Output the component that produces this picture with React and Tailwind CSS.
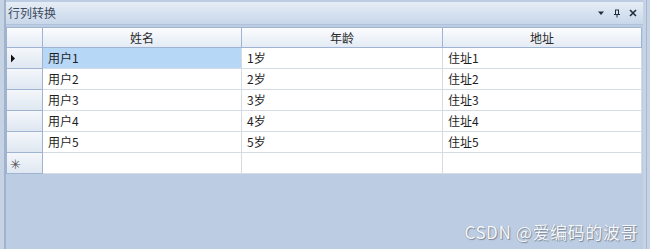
const rows = [
  { name: '用户1', age: '1岁', addr: '住址1' },
  { name: '用户2', age: '2岁', addr: '住址2' },
  { name: '用户3', age: '3岁', addr: '住址3' },
  { name: '用户4', age: '4岁', addr: '住址4' },
  { name: '用户5', age: '5岁', addr: '住址5' },
];

const font = { fontFamily: '"Noto Sans CJK SC", "Noto Sans", sans-serif' };

function RowHead({ children }) {
  return (
    <div className="h-[21px] border-r border-b border-[#9eb4d0] bg-gradient-to-b from-[#f4f7fb] to-[#dfe7f1] flex items-center pl-[3px] text-[11px] text-[#444]">
      {children}
    </div>
  );
}

function Cell({ children, selected }) {
  return (
    <div
      className={`h-[21px] border-r border-b border-[#d5dbe3] flex items-center pl-[5px] text-[12px] text-[#1e1e1e] ${selected ? 'bg-[#b7d7f7]' : 'bg-white'}`}
    >
      {children}
    </div>
  );
}

export default function App() {
  return (
    <div className="w-[650px] h-[249px] bg-[#bccde3] flex overflow-hidden" style={font}>
      {/* left frame */}
      <div className="w-[4px] bg-[#c6d3e4]" />
      <div className="w-[2px] bg-[#a1b3cb]" />

      <div className="flex-1 flex flex-col">
        {/* title bar */}
        <div className="h-[23px] mt-[2px] bg-gradient-to-b from-[#e6edf6] to-[#c8d7ea] border-b border-[#b2c3d9] flex items-center justify-between pr-[6px]">
          <span className="pl-[2px] text-[12px] text-[#3d4b5e]">行列转换</span>
          <div className="flex items-center gap-[8px] text-[#1f2d3d]">
            <svg width="8" height="6" viewBox="0 0 8 6"><path d="M1 1.5h6L4 5z" fill="#1f2d3d" /></svg>
            <svg width="8" height="9" viewBox="0 0 8 9"><path d="M2 1h4M2.5 1v4.5M5.5 1v4.5M1 5.5h6M4 5.5V8.5" stroke="#1f2d3d" strokeWidth="1" fill="none" /></svg>
            <svg width="8" height="8" viewBox="0 0 8 8"><path d="M1 1l6 6M7 1l-6 6" stroke="#1f2d3d" strokeWidth="1.6" /></svg>
          </div>
        </div>

        {/* grid */}
        <div className="mt-[2px] w-[635px] grid grid-cols-[36px_199px_201px_199px] border-l border-t border-[#9eb4d0]">
          <div className="h-[20px] border-r border-b border-[#9eb4d0] bg-gradient-to-b from-[#fbfcfe] to-[#e4ebf4]" />
          {['姓名', '年龄', '地址'].map((h) => (
            <div
              key={h}
              className="h-[20px] border-r border-b border-[#9eb4d0] bg-gradient-to-b from-[#fbfcfe] to-[#e4ebf4] flex items-center justify-center text-[12px] text-[#2a2a2a]"
            >
              {h}
            </div>
          ))}
          {rows.map((r, i) => (
            <div key={r.name} className="contents">
              <RowHead>
                {i === 0 && (
                  <svg width="6" height="9" viewBox="0 0 6 9"><path d="M1 0.5L5 4.5L1 8.5z" fill="#111" /></svg>
                )}
              </RowHead>
              <Cell selected={i === 0}>{r.name}</Cell>
              <Cell>{r.age}</Cell>
              <Cell>{r.addr}</Cell>
            </div>
          ))}
          <RowHead>
            <span className="text-[13px] leading-none text-[#555]">✳</span>
          </RowHead>
          <Cell />
          <Cell />
          <Cell />
        </div>

        {/* watermark */}
        <div className="flex-1 flex items-end justify-end pr-[5px] pb-[5px]">
          <span
            className="text-[17px] text-[#f4f7fb] tracking-[0.6px]"
            style={{ textShadow: '1px 1px 1px #7c8796, -0.5px -0.5px 0 #9aa6b6' }}
          >
            CSDN @爱编码的波哥
          </span>
        </div>
      </div>

      {/* right frame */}
      <div className="w-[3px] bg-[#c6d3e4]" />
      <div className="w-[1px] bg-[#a7b8cf]" />
      <div className="w-[3px] bg-[#c6d3e4]" />
    </div>
  );
}
